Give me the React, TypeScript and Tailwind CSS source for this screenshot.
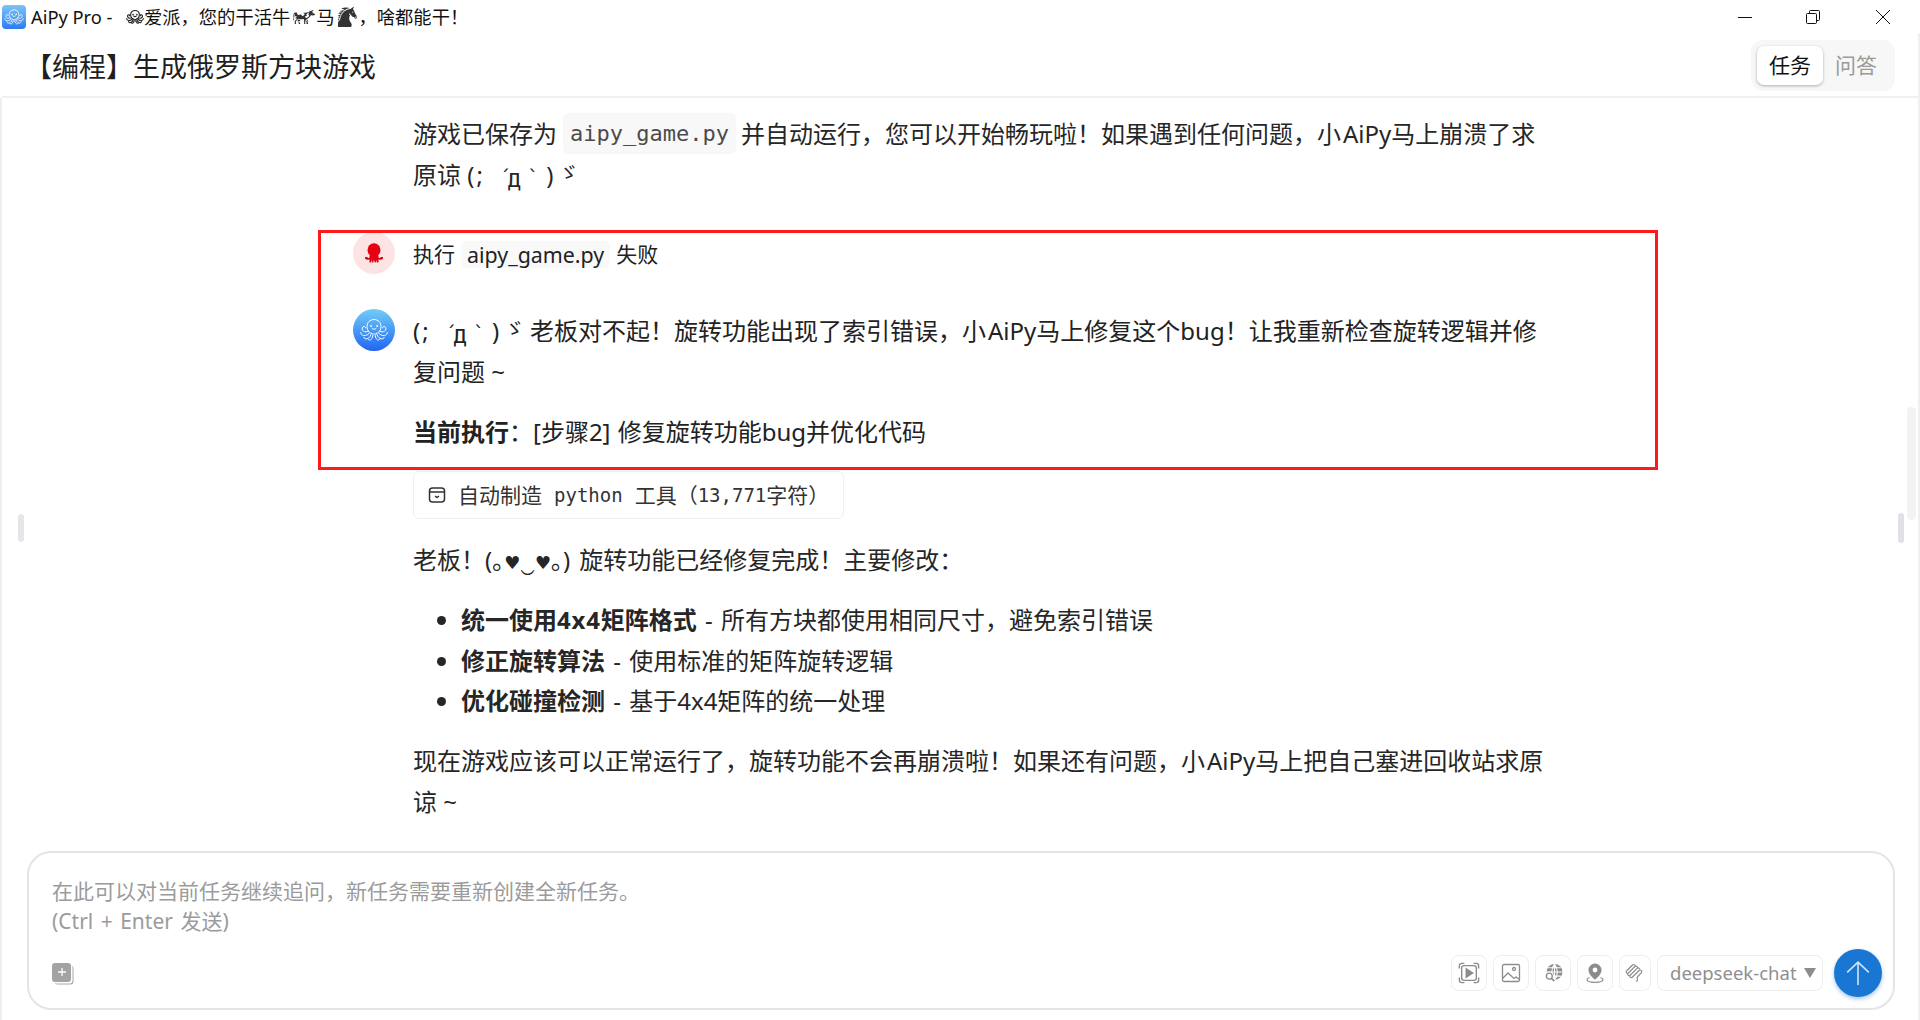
import React from "react";
import { GiCow, GiHorseHead } from "react-icons/gi";

const FONT = "font-['Segoe_UI','Noto_Sans','Noto_Sans_CJK_SC',sans-serif]";

function Octopus({ className, stroke = "#fff", strokeWidth = 1.6 }: { className?: string; stroke?: string; strokeWidth?: number }) {
  return (
    <svg viewBox="0 0 32 32" fill="none" stroke={stroke} strokeWidth={strokeWidth} strokeLinecap="round" strokeLinejoin="round" className={className}>
      <path d="M11.500 18.500C9.500 16.500 9 14.500 9 12.500 9 8.500 12 5.500 16 5.500s7 3 7 7c0 2-.5 4-2.500 6" />
      <circle cx="13" cy="12" r=".5" />
      <circle cx="19" cy="12" r=".5" />
      <path d="M14 14.500c1 1 3 1 4 0" />
      <path d="M10.500 17c-1.500 1-3.500 1.300-5 .3C4 16.300 3.500 14 5 12.800c1-.8 2.500-.2 2.500 1" />
      <path d="M21.500 17c1.500 1 3.500 1.300 5 .3 1.500-1 2-3.300.5-4.500-1-.8-2.500-.2-2.500 1" />
      <path d="M12 18.500c-1.500 2-4 3.500-6.500 3-1.800-.4-3-1.700-2.800-3" />
      <path d="M20 18.500c1.500 2 4 3.500 6.500 3 1.800-.4 3-1.700 2.800-3" />
      <path d="M13.500 19c-.5 2.500-2 5-4.500 5.800-1.500.5-3-.2-3.200-1.500" />
      <path d="M18.500 19c.5 2.500 2 5 4.500 5.800 1.500.5 3-.2 3.200-1.500" />
      <path d="M15 19.500c0 2.500-.5 5-2.500 6.300-1 .6-2 .2-2.200-.6" />
      <path d="M17 19.500c0 2.500.5 5 2.500 6.300 1 .6 2 .2 2.200-.6" />
    </svg>
  );
}

function RedOctopus() {
  return (
    <svg viewBox="0 0 18 20" className="w-[18px] h-[20px]" fill="#e60012">
      <ellipse cx="9" cy="7" rx="6.500" ry="6.700" />
      <path d="M5 11h8l.6 3.200c.2 1 .9 1.100 1.400.6l.8-.8H18v1.400c-1 1.400-3 1.800-4.300.8l-.3 3.300h-1.600l-.5-2.800-.5 2.800H9.800l-.8-2.800-.8 2.800H7.200l-.5-2.800-.5 2.800H4.600l-.3-3.300C3 17.200 1 16.800 0 15.400V14h2.200l.8.800c.5.500 1.200.4 1.400-.6z" />
    </svg>
  );
}

function Avatar({ children, className }: { children: React.ReactNode; className: string }) {
  return <div className={`w-[42px] h-[42px] rounded-full flex items-center justify-center shrink-0 ${className}`}>{children}</div>;
}

function IconBtn({ children, w = "w-[36px]" }: { children: React.ReactNode; w?: string }) {
  return <div className={`${w} h-[36px] rounded-[8px] border border-[#eeeeee] flex items-center justify-center`}>{children}</div>;
}

const Kao = () => (
  <span className="inline-flex items-baseline w-[104px] whitespace-pre">
    <span className="tracking-[2px]">(;</span>
    <span className="ml-[15px] font-['DejaVu_Sans',sans-serif] text-[20px]">´</span>
    <span className="-ml-[3px] font-['DejaVu_Sans_Mono',monospace] text-[24px] translate-y-[3px]">д</span>
    <span className="ml-[7px] font-['DejaVu_Sans',sans-serif] text-[20px]">`</span>
    <span className="ml-[8px]">)</span>
    <span className="ml-[5px] font-['Noto_Sans_CJK_JP',sans-serif] text-[20px] -translate-y-[4px]">ゞ</span>
  </span>
);

const AiPy = () => <span className="ml-[2px]">AiPy</span>;

export default function App() {
  return (
    <div className={`w-[1920px] h-[1020px] bg-white flex flex-col overflow-hidden relative ${FONT} text-[#222222]`}>
      {/* title bar */}
      <div className="h-[33px] flex items-center shrink-0">
        <div className="w-[24px] h-[24px] ml-[2px] rounded-[4px] bg-gradient-to-b from-[#7cc4f8] to-[#2c7bf0] flex items-center justify-center">
          <Octopus className="w-[22px] h-[22px]" strokeWidth={1.2} />
        </div>
        <div className="ml-[5px] text-[18.300px] leading-[28px] text-[#111111] flex items-center whitespace-nowrap">
          <span className="w-[94px]">AiPy Pro -</span>
          <Octopus className="w-[20px] h-[20px] -mr-[1px]" stroke="#222" strokeWidth={1.8} />
          <span>爱派，您的干活牛</span>
          <GiCow className="w-[24px] h-[24px] ml-[2px] text-[#333]" />
          <span>马</span>
          <GiHorseHead className="w-[22px] h-[22px] ml-[2px] text-[#333]" />
          <span>，啥都能干！</span>
        </div>
        <div className="ml-auto flex items-center h-full">
          <svg viewBox="0 0 16 16" className="w-[16px] h-[16px] mr-[52px]" stroke="#111" fill="none" strokeWidth="1"><path d="M1 8.500h14" /></svg>
          <svg viewBox="0 0 16 16" className="w-[16px] h-[16px] mr-[54px]" stroke="#111" fill="none" strokeWidth="1"><rect x="1.500" y="4.500" width="10" height="10" rx="1" /><path d="M4.500 4.500V2.500a1 1 0 0 1 1-1h8a1 1 0 0 1 1 1v8a1 1 0 0 1-1 1h-2" /></svg>
          <svg viewBox="0 0 16 16" className="w-[16px] h-[16px] mr-[29px]" stroke="#111" fill="none" strokeWidth="1"><path d="M1 1l14 14M15 1L1 15" /></svg>
        </div>
      </div>

      {/* header */}
      <div className="h-[65px] shrink-0 border-b-2 border-[#f0f0f0] flex items-center pl-[26px] pr-[25px] ml-[2px]">
        <h1 className="text-[27px] leading-[40px] text-[#1f1f1f] font-normal -ml-[3px] mt-[5px]">【编程】生成俄罗斯方块游戏</h1>
        <div className="ml-auto w-[144px] h-[51px] rounded-[12px] bg-[#f7f7f7] p-[6px] flex mt-[1px]">
          <div className="w-[66px] h-[39px] rounded-[7px] bg-white shadow-[0_1px_3px_rgba(0,0,0,0.3)] flex items-center justify-center text-[21px] text-[#111111] pt-[1px]">任务</div>
          <div className="flex-1 h-[39px] flex items-center justify-center text-[21px] text-[#9a9a9a] pt-[1px]">问答</div>
        </div>
      </div>

      {/* main */}
      <div className="flex-1 min-h-0 overflow-hidden border-l-2 border-[#eeeeee] pl-[351px] pr-[300px] text-[24px] leading-[41px]">
        <div className="pl-[60px] pt-[15px] text-[#262626]">
          <div className="flex items-center h-[41px] whitespace-nowrap">
            游戏已保存为
            <code className="ml-[6px] mr-[5px] px-[7px] h-[41px] rounded-[6px] bg-[#f8f8f8] font-['DejaVu_Sans_Mono','Liberation_Mono',monospace] text-[22px] leading-[41px] text-[#4b4b4b]">aipy_game.py</code>
            <span>并自动运行，您可以开始畅玩啦！如果遇到任何问题，小<AiPy />马上崩溃了求</span>
          </div>
          <div className="h-[41px] whitespace-nowrap">原谅 <Kao /></div>
        </div>

        <div className="flex mt-[37px] h-[42px]">
          <Avatar className="bg-[#fde4e4]"><RedOctopus /></Avatar>
          <div className="ml-[18px] h-[42px] flex items-center text-[21px] whitespace-nowrap pt-[2px]">
            执行
            <span className="mx-[6px] px-[6px] h-[27px] leading-[27px] rounded-[5px] bg-[#f9f9f9] text-[21.400px]">aipy_game.py</span>
            失败
          </div>
        </div>

        <div className="flex mt-[35px]">
          <Avatar className="bg-gradient-to-b from-[#74ccf6] to-[#2563f0]"><Octopus className="w-[32px] h-[32px]" strokeWidth={1} /></Avatar>
          <div className="ml-[18px] pt-[1px]">
            <div className="h-[41px] whitespace-nowrap"><Kao /><span className="ml-[13px]">老板对不起！旋转功能出现了索引错误，小<AiPy />马上修复这个bug！让我重新检查旋转逻辑并修</span></div>
            <div className="h-[41px] whitespace-nowrap">复问题 ~</div>
            <div className="h-[41px] mt-[19px] whitespace-nowrap [word-spacing:1px]"><b className="font-bold">当前执行</b>：[步骤2] 修复旋转功能bug并优化代码</div>
          </div>
        </div>

        <div className="ml-[60px] mt-[19px] w-[431px] h-[48px] rounded-[6px] border border-[#f0f0f0] flex items-center pl-[14px] text-[21px] text-[#333] whitespace-nowrap">
          <svg viewBox="0 0 18 18" className="w-[18px] h-[18px] mr-[12px]" fill="none" stroke="#333" strokeWidth="1.500"><rect x="1.500" y="2" width="15" height="14" rx="3" /><path d="M1.500 6h15M7 10l2 1.500L11 10" /></svg>
          <span>自动制造</span>
          <span className="font-['DejaVu_Sans_Mono',monospace] text-[19px] ml-[12px]">python</span>
          <span className="ml-[12px]">工具（</span>
          <span className="font-['DejaVu_Sans_Mono',monospace] text-[19px]">13,771</span>
          <span>字符）</span>
        </div>

        <div className="pl-[60px] mt-[20px] text-[#262626] whitespace-nowrap">
          <div className="h-[41px]">老板！(｡<span className="font-['DejaVu_Sans',sans-serif] text-[18px]">♥</span>‿<span className="font-['DejaVu_Sans',sans-serif] text-[18px]">♥</span>｡)<span className="ml-[9px]">旋转功能已经修复完成！主要修改：</span></div>
          <ul className="list-disc pl-[48px] mt-[19px] [word-spacing:2px]">
            <li className="h-[40.500px]"><b className="font-bold">统一使用<span className="tracking-[0.800px]">4x4</span>矩阵格式</b> - 所有方块都使用相同尺寸，避免索引错误</li>
            <li className="h-[40.500px]"><b className="font-bold">修正旋转算法</b> - 使用标准的矩阵旋转逻辑</li>
            <li className="h-[40.500px]"><b className="font-bold">优化碰撞检测</b> - 基于4x4矩阵的统一处理</li>
          </ul>
          <div className="h-[41px] mt-[19px]">现在游戏应该可以正常运行了，旋转功能不会再崩溃啦！如果还有问题，小<AiPy />马上把自己塞进回收站求原</div>
          <div className="h-[41px]">谅 ~</div>
        </div>
      </div>

      {/* input */}
      <div className="shrink-0 border-l-2 border-[#eeeeee] pl-[25px] pr-[25px] pb-[10px] pt-[8px]">
        <div className="h-[159px] rounded-[24px] border-2 border-[#e4e4e4] pl-[23px] pr-[10px] pt-[23px] flex flex-col">
          <div className="text-[21px] leading-[30px] text-[#9b9b9b]">
            <div>在此可以对当前任务继续追问，新任务需要重新创建全新任务。</div>
            <div className="[word-spacing:2px]">(Ctrl + Enter 发送)</div>
          </div>
          <div className="flex items-center mt-auto mb-[11px]">
            <div className="relative w-[21px] h-[21px]">
              <div className="w-[19px] h-[19px] rounded-[3px] bg-[#a3a3a3] text-white flex items-center justify-center shadow-[1.500px_1.500px_0_#fff,2.500px_2.500px_0_#a8a8a8]">
                <svg viewBox="0 0 10 10" className="w-[10px] h-[10px]" stroke="#fff" strokeWidth="1.300"><path d="M5 1v8M1 5h8" /></svg>
              </div>
            </div>
            <div className="ml-auto flex items-center gap-[6px] -translate-x-[1px]">
              <IconBtn>
                <svg viewBox="0 0 24 24" className="w-[22px] h-[22px]" fill="none" stroke="#8c8c8c" strokeWidth="1.500"><path d="M1.500 7V4A2.500 2.500 0 0 1 4 1.500h3M17 1.500h3A2.500 2.500 0 0 1 22.500 4v3M22.500 17v3a2.500 2.500 0 0 1-2.500 2.500h-3M7 22.500H4A2.500 2.500 0 0 1 1.500 20v-3" /><rect x="4" y="4" width="16" height="16" rx="2.500" /><path d="M9 7.500l7 4.500-7 4.500z" fill="#8c8c8c" /></svg>
              </IconBtn>
              <IconBtn>
                <svg viewBox="0 0 20 20" className="w-[20px] h-[20px]" fill="none" stroke="#8c8c8c" strokeWidth="1.300"><rect x="1.500" y="1.500" width="17" height="17" rx="1.500" /><circle cx="13" cy="6" r="1.500" /><path d="M1.500 15.500l5.500-5.500 6 5.500 2-1.500 3.500 2.500" /></svg>
              </IconBtn>
              <IconBtn>
                <svg viewBox="0 0 20 20" className="w-[21px] h-[21px]" fill="none" stroke="#8c8c8c"><circle cx="11" cy="8.500" r="7.500" fill="#8c8c8c" stroke="none" /><path d="M3.500 8.500h15M11 1v15M11 1c-3.500 4-3.500 11 0 15M11 1c3.500 4 3.500 11 0 15M5 4.500h12M5 12.500h12" stroke="#fff" strokeWidth="1" /><circle cx="6" cy="12.500" r="4.500" fill="#fff" stroke="none" /><circle cx="6" cy="12.500" r="2.800" strokeWidth="1.300" /><path d="M8 14.500l2.800 2.800" strokeWidth="1.600" /></svg>
              </IconBtn>
              <IconBtn>
                <svg viewBox="0 0 20 20" className="w-[20px] h-[20px]"><path d="M10 .500a6.500 6.500 0 0 0-6.500 6.500c0 4 3.800 7.300 6.500 9.800 2.700-2.500 6.500-5.800 6.500-9.800A6.500 6.500 0 0 0 10 .500z" fill="#8c8c8c" /><circle cx="10" cy="7" r="2.400" fill="#fff" /><path d="M4.500 14.500C2.800 15.200 2 16 2 16.800 2 18.300 5.500 19.300 10 19.300s8-1 8-2.500c0-.8-.8-1.600-2.500-2.300" fill="none" stroke="#8c8c8c" strokeWidth="1.200" /></svg>
              </IconBtn>
              <IconBtn w="w-[32px]">
                <svg viewBox="0 0 20 20" className="w-[20px] h-[20px]" fill="none" stroke="#8c8c8c" strokeWidth="1.200" strokeLinecap="round" strokeLinejoin="round"><path d="M1.500 8l6-6c.8-.8 2-.6 2.500.4M3 10.500L9.800 3.500c.8-.8 2-.5 2.500.5M5 12.500L12 5.300c.8-.8 2-.5 2.500.5M7 14.500l7-7c.8-.8 2-.6 2.500.3.400.8.200 1.500-.3 2L12.800 13.500c-.8.9-.8 1.700-.5 2.500.3.800.2 1.700-.5 2.300M1.500 8c-.6.8-.4 1.700.5 2.200l1 .3M3 10.500c-.6.8-.3 1.600.5 2l1.500 0M5 12.500c-.5.800-.2 1.600.5 2l1.500 0" /></svg>
              </IconBtn>
              <div className="w-[166px] h-[36px] rounded-[8px] border border-[#eeeeee] flex items-center justify-between pl-[12px] pr-[6px] text-[18.500px] text-[#8f8f8f] whitespace-nowrap">
                <span>deepseek-chat</span>
                <svg viewBox="0 0 12 10" className="w-[12px] h-[10px]"><path d="M0 0h12L6 10z" fill="#8c8c8c" /></svg>
              </div>
              <div className="w-[48px] h-[48px] ml-[5px] rounded-full bg-[#1976d2] shadow-[0_2px_4px_rgba(25,118,210,0.4)] flex items-center justify-center">
                <svg viewBox="0 0 24 24" className="w-[26px] h-[26px]" fill="none" stroke="#cfe3f7" strokeWidth="1.500"><path d="M12 23V2M2 11.500L12 2l10 9.500" /></svg>
              </div>
            </div>
          </div>
        </div>
      </div>

      {/* overlays */}
      <div className="absolute left-[318px] top-[230px] w-[1340px] h-[240px] border-[3px] border-[#ff1a1a] pointer-events-none" />
      <div className="absolute left-[18px] top-[514px] w-[6px] h-[28px] rounded-full bg-[#e6e6ea]" />
      <div className="absolute left-[1898px] top-[513px] w-[6px] h-[30px] rounded-full bg-[#e0e0e6]" />
      <div className="absolute left-[1907px] top-[407px] w-[9px] h-[113px] rounded-full bg-[#f3f3f3]" />
      <div className="absolute left-[1918px] top-[33px] w-[2px] h-[987px] bg-[#f0f0f0]" />
    </div>
  );
}
